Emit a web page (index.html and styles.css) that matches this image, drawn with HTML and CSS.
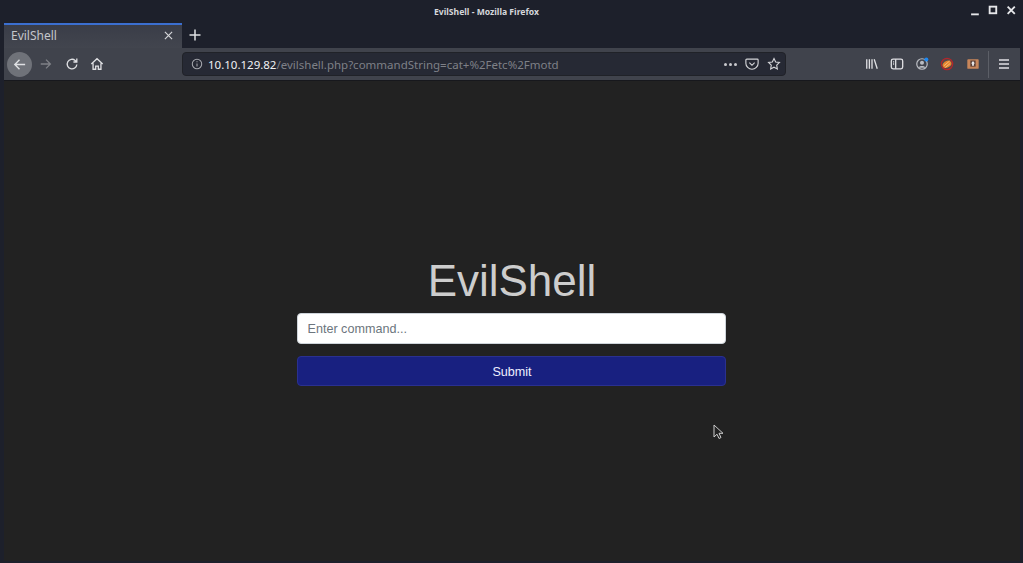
FILE: index.html
```html
<!DOCTYPE html>
<html lang="en">
<head>
<meta charset="utf-8">
<title>EvilShell - Mozilla Firefox</title>
<link rel="stylesheet" href="styles.css">
</head>
<body>
<div class="window">
  <header class="titlebar">
    <span class="window-title">EvilShell - Mozilla Firefox</span>
    <div class="window-controls">
      <svg class="wc" viewBox="0 0 10 10"><path d="M1 8.500h7" /></svg>
      <svg class="wc" viewBox="0 0 10 10"><rect x="1.500" y="1.500" width="6" height="6" /></svg>
      <svg class="wc" viewBox="0 0 10 10"><path d="M1.500 1.500l6.500 6.500M8 1.500l-6.500 6.500" /></svg>
    </div>
  </header>
  <div class="tabstrip">
    <div class="tab">
      <span class="tab-label">EvilShell</span>
      <svg class="tab-close" viewBox="0 0 10 10"><path d="M1 1l8 8M9 1l-8 8" /></svg>
    </div>
    <svg class="new-tab" viewBox="0 0 12 12"><path d="M6 0.500v11M0.500 6h11" /></svg>
  </div>
  <nav class="toolbar">
    <div class="back"><svg viewBox="0 0 16 16" class="ic-line"><path d="M14 8H3M8 3L3 8l5 5" /></svg></div>
    <svg class="nav-ic dim ic-line" viewBox="0 0 16 16"><path d="M2 8h11M8 3l5 5-5 5" /></svg>
    <svg class="nav-ic ic-line" viewBox="0 0 16 16"><path d="M13.500 8.500A5.500 5.500 0 1 1 11.600 3.900L13.500 5.600M13.500 1.800v3.900H9.600" /></svg>
    <svg class="nav-ic ic-line" viewBox="0 0 16 16"><path d="M1.500 8L8 2l6.500 6M3.500 7v7h3V10.500h3V14h3V7" /></svg>
    <div class="urlbar">
      <svg class="info ic-line" viewBox="0 0 14 14"><circle cx="7" cy="7" r="5.500" /><path d="M7 6.500v3.500M7 3.800v1.300" /></svg>
      <span class="url"><span class="host">10.10.129.82</span>/evilshell.php?commandString=cat+%2Fetc%2Fmotd</span>
      <span class="dots"><i></i><i></i><i></i></span>
      <svg class="url-ic ic-line" viewBox="0 0 16 16"><path d="M2 2.500h12a1 1 0 0 1 1 1V7a7 7 0 0 1-14 0V3.500a1 1 0 0 1 1-1zM5 6.500l3 3 3-3" /></svg>
      <svg class="url-ic ic-line" viewBox="0 0 16 16"><path d="M8 1.800l1.900 3.900 4.300.6-3.100 3 .7 4.300L8 11.600l-3.800 2 .7-4.300-3.100-3 4.300-.6z" /></svg>
    </div>
    <div class="tools">
      <svg class="tool ic-line" viewBox="0 0 16 16"><path d="M2 2.500v11M5 2.500v11M8 2.500v11M10.500 2.500l3.500 11" /></svg>
      <svg class="tool ic-line" viewBox="0 0 16 16"><rect x="1.500" y="2.500" width="13" height="11" rx="2" /><path d="M6.500 2.500v11M3.500 5.500h1.200M3.500 8h1.200" /></svg>
      <svg class="tool" viewBox="0 0 16 16"><circle cx="8" cy="8" r="6" fill="none" stroke="#b9bcc2" stroke-width="1.400" /><circle cx="8" cy="6.500" r="2.300" fill="#b9bcc2" /><path d="M3.800 12.200c1-2.600 7.400-2.600 8.400 0z" fill="#b9bcc2" /><circle cx="13" cy="2.800" r="2.300" fill="#1e88f0" /></svg>
      <svg class="tool" viewBox="0 0 16 16"><circle cx="8" cy="8" r="6.500" fill="#54474a" stroke="#b3262b" stroke-width="1.400" /><ellipse cx="8" cy="8.300" rx="5.300" ry="3.700" fill="#e8862e" transform="rotate(-30 8 8.300)" /><path d="M4.500 10l6.500-5.500M6 12l5.500-4.500" stroke="#f5c78c" stroke-width="0.900" /></svg>
      <svg class="tool box" viewBox="0 0 16 16"><rect x="1.500" y="2.500" width="13" height="11" rx="1" fill="#c8865a" /><rect x="5" y="4" width="6" height="7" fill="#5a4038" /><path d="M8 4.500l2.200 2.800H9V10H7V7.300H5.800z" fill="#eee" /></svg>
    </div>
    <span class="tool-sep"></span>
    <svg class="menu ic-line" viewBox="0 0 12 12"><path d="M1 2h10M1 6h10M1 10h10" /></svg>
  </nav>
  <main class="page">
    <div class="shell">
      <h1 class="heading">EvilShell</h1>
      <form class="shell-form">
        <input class="command" type="text" placeholder="Enter command...">
        <button class="submit" type="button">Submit</button>
      </form>
    </div>
    <svg class="cursor" viewBox="0 0 12 16"><path d="M1 1v12l3-2.800 2 4.300 2-1-2-4.200h4z" fill="#222" stroke="#ccc" stroke-width="1" /></svg>
  </main>
</div>
</body>
</html>
```
FILE: styles.css
```css
* { box-sizing: border-box; }
html, body { margin: 0; height: 100%; overflow: hidden; }
body { background: #1c1f2a; font-family: "Noto Sans", sans-serif; }
.window {
  width: 1023px; height: 563px;
  display: flex; flex-direction: column;
  padding: 0 3px 2px 4px;
  background: #1d202b;
}
.titlebar {
  height: 23px; flex: none;
  display: flex; align-items: center; justify-content: space-between;
}
.window-title { margin-left: 430px; font-size: 8.600px; font-weight: 700; color: #d5d7db; }
.window-controls { display: flex; gap: 7px; padding-right: 3px; padding-bottom: 2px; }
.wc { width: 11px; height: 11px; fill: none; stroke: #e6e7ea; stroke-width: 1.700; }
.tabstrip { height: 25px; flex: none; display: flex; align-items: stretch; }
.tab {
  width: 178px; display: flex; align-items: center; justify-content: space-between;
  padding: 0 9px 2px 7px;
  background: linear-gradient(#3a3d48, #42454e);
  border-top: 2px solid #3b6fd0;
  color: #c4c6cb; font-size: 12px;
}
.tab-close { width: 9px; height: 9px; fill: none; stroke: #d6d7da; stroke-width: 1.300; }
.new-tab { width: 12px; height: 12px; margin: 6px 0 0 7px; fill: none; stroke: #e0e1e4; stroke-width: 1.500; }
.toolbar {
  height: 33px; flex: none; display: flex; align-items: center;
  background: #40434c; border-bottom: 1px solid #17181d;
  padding-left: 3px;
}
.ic-line { fill: none; stroke: #dfe0e3; stroke-width: 1.500; }
.back {
  width: 25px; height: 25px; border-radius: 50%;
  background: #6f7279;
  display: flex; align-items: center; justify-content: center;
  margin-right: 7px;
}
.back svg { width: 15px; height: 15px; }
.nav-ic { width: 14px; height: 14px; margin-right: 11px; }
.dim { stroke: #7f8187; margin-right: 12px; }
.urlbar {
  width: 604px; height: 24px; margin-left: 67px;
  display: flex; align-items: center;
  background: #262934; border-radius: 4px; border: 1px solid #202228;
  padding: 0 4px 0 8px;
}
.info { width: 12px; height: 12px; stroke: #a7a9af; stroke-width: 1.200; flex: none; }
.url { margin-left: 5px; flex: 1; font-size: 11.500px; color: #7e8087; white-space: nowrap; }
.host { color: #f0f1f3; }
.dots { display: flex; gap: 2px; }
.dots i { width: 3px; height: 3px; border-radius: 50%; background: #c8c9cd; }
.url-ic { width: 14px; height: 14px; margin-left: 8px; stroke: #d4d5d8; stroke-width: 1.300; }
.tools { display: flex; gap: 11px; margin-left: 79px; align-items: center; }
.tool { width: 14px; height: 14px; }
.box { margin-left: 1px; }
.tool-sep { width: 1px; height: 27px; background: #5c5f67; margin-left: 8px; }
.menu { width: 12px; height: 12px; margin-left: 9px; stroke: #dfe0e3; stroke-width: 1.300; }
.page {
  flex: 1; position: relative; background: #222222;
  display: flex; justify-content: center; padding: 176px 2px 0 0;
}
.shell { width: 429px; display: flex; flex-direction: column; align-items: stretch; }
.heading {
  margin: 0 0 8px; padding-left: 2px; text-align: center;
  font: 400 44px/48px "Liberation Sans", Arial, sans-serif;
  color: #cdcdcd;
}
.shell-form { display: flex; flex-direction: column; gap: 12px; }
.command {
  height: 31px; width: 100%;
  padding: 0 10px; border: 1px solid #ced4da; border-radius: 4px;
  background: #fff; color: #495057;
  font: 12.600px "Liberation Sans", Arial, sans-serif;
}
.command::placeholder { color: #6c757d; opacity: 1; }
.submit {
  height: 30px; width: 100%; padding: 2px 0 0 2px;
  background: #182080; border: 1px solid #2a3090; border-radius: 4px;
  color: #eef; text-align: center;
  font: 12.600px "Liberation Sans", Arial, sans-serif;
}
.cursor { position: absolute; left: 709px; top: 343px; width: 12px; height: 16px; }
```
